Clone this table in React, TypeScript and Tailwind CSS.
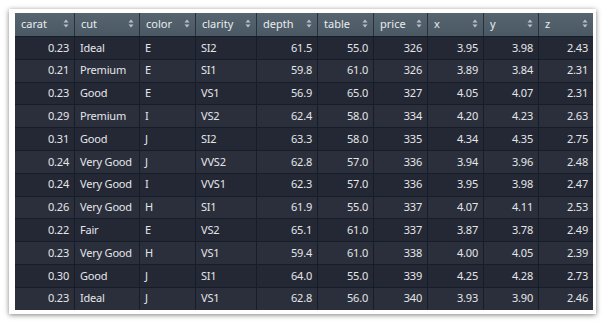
const columns = [
  { key: "carat", w: "w-[59px]", num: true },
  { key: "cut", w: "w-[65px]", num: false },
  { key: "color", w: "w-[56px]", num: false },
  { key: "clarity", w: "w-[61px]", num: false },
  { key: "depth", w: "w-[61px]", num: true },
  { key: "table", w: "w-[56px]", num: true },
  { key: "price", w: "w-[54px]", num: true },
  { key: "x", w: "w-[56px]", num: true },
  { key: "y", w: "w-[55px]", num: true },
  { key: "z", w: "w-[55px]", num: true },
];

const rows = [
  ["0.23", "Ideal", "E", "SI2", "61.5", "55.0", "326", "3.95", "3.98", "2.43"],
  ["0.21", "Premium", "E", "SI1", "59.8", "61.0", "326", "3.89", "3.84", "2.31"],
  ["0.23", "Good", "E", "VS1", "56.9", "65.0", "327", "4.05", "4.07", "2.31"],
  ["0.29", "Premium", "I", "VS2", "62.4", "58.0", "334", "4.20", "4.23", "2.63"],
  ["0.31", "Good", "J", "SI2", "63.3", "58.0", "335", "4.34", "4.35", "2.75"],
  ["0.24", "Very Good", "J", "VVS2", "62.8", "57.0", "336", "3.94", "3.96", "2.48"],
  ["0.24", "Very Good", "I", "VVS1", "62.3", "57.0", "336", "3.95", "3.98", "2.47"],
  ["0.26", "Very Good", "H", "SI1", "61.9", "55.0", "337", "4.07", "4.11", "2.53"],
  ["0.22", "Fair", "E", "VS2", "65.1", "61.0", "337", "3.87", "3.78", "2.49"],
  ["0.23", "Very Good", "H", "VS1", "59.4", "61.0", "338", "4.00", "4.05", "2.39"],
  ["0.30", "Good", "J", "SI1", "64.0", "55.0", "339", "4.25", "4.28", "2.73"],
  ["0.23", "Ideal", "J", "VS1", "62.8", "56.0", "340", "3.93", "3.90", "2.46"],
];

function SortIcon() {
  return (
    <svg width="6" height="9" viewBox="0 0 6 9" className="mb-[3px] shrink-0">
      <path d="M3 0.5 L5.5 3.5 L0.5 3.5 Z" fill="#b9c2ca" />
      <path d="M3 8.5 L5.5 5.5 L0.5 5.5 Z" fill="#b9c2ca" />
    </svg>
  );
}

export default function App() {
  return (
    <div className="h-[326px] w-[610px] bg-white p-[9px] font-['Noto_Sans',sans-serif] text-[11px]">
      <div className="w-[587px] bg-white pl-[6px] pt-[4px] pr-[3px] pb-[4px] shadow-[0_1px_5px_rgba(0,0,0,0.5)]">
        <div className="flex w-[578px] flex-col bg-[#18212c]">
          {/* Header */}
          <div className="flex h-[23px] bg-gradient-to-b from-[#56646f] to-[#4b5965]">
            {columns.map((c, i) => (
              <div
                key={c.key}
                className={`${c.w} flex items-center justify-between whitespace-nowrap pl-[6px] pr-[5px] text-[#e9ecef] ${i > 0 ? "border-l border-[#26323d]" : ""}`}
              >
                <span>{c.key}</span>
                <SortIcon />
              </div>
            ))}
          </div>

          {/* Body */}
          {rows.map((r, ri) => (
            <div
              key={ri}
              className={`flex h-[22.8px] border-t border-[#141d28] ${ri % 2 === 1 ? "bg-[#2b2f3b]" : "bg-[#242835]"}`}
            >
              {r.map((v, ci) => (
                <div
                  key={ci}
                  className={`${columns[ci].w} flex items-center overflow-hidden whitespace-nowrap px-[5px] tracking-[-0.2px] text-[#e4e6ea] ${columns[ci].num ? "justify-end" : "justify-start"} ${ci > 0 ? "border-l border-[#141d28]" : ""}`}
                >
                  {v}
                </div>
              ))}
            </div>
          ))}
        </div>
      </div>
    </div>
  );
}
